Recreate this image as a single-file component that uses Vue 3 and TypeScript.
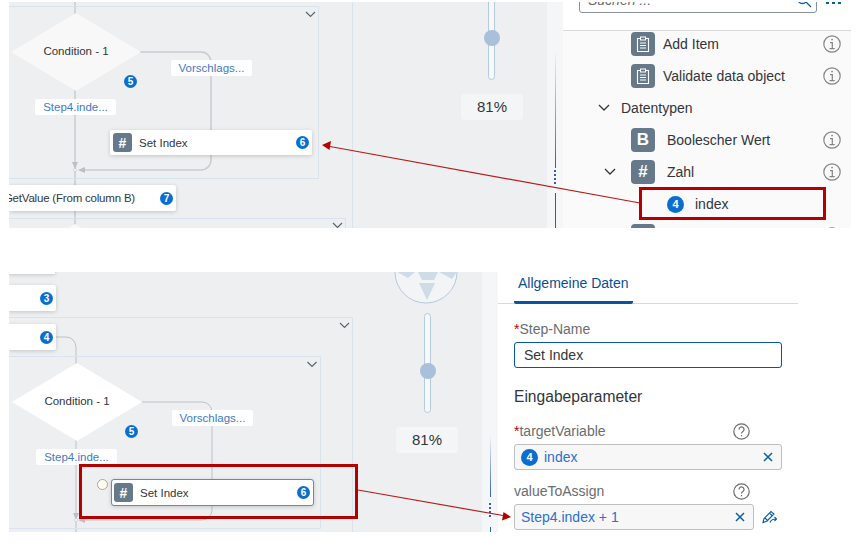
<template>
  <div class="page">
    <!-- first capture: variable picked from the tree -->
    <section class="shot shot-top">
      <div class="canvas">
        <svg class="edges" viewBox="0 2 538 226" width="538" height="226">
          <g transform="translate(-9 0)">
            <path class="edge" d="M75 2V228M140 52H201a10 10 0 0 1 10 10V160a10 10 0 0 1-10 10H80" />
            <path class="group" d="M9 6.500H318.500V178.500H9M9 218.500H345.500V228M352.500 2V228" />
            <path class="chev" d="M306 12l4.500 4.500 4.500-4.500M333 223l4.500 4.500 4.500-4.500" />
            <path class="tip" d="M72 162h6l-3 7zM85 167v6l-7-3z" />
            <circle class="joint" cx="75" cy="170" r="1.500" />
          </g>
        </svg>
        <div class="diamond d-top"><span>Condition - 1</span></div>
        <i class="badge b-5-top">5</i>
        <span class="tag t-vor-top">Vorschlags...</span>
        <span class="tag t-step-top">Step4.inde...</span>
        <div class="node n-set-top">
          <b class="tile small">#</b>
          <span>Set Index</span>
          <i class="badge end">6</i>
        </div>
        <div class="node n-get">
          <span>GetValue (From column B)</span>
          <i class="badge end">7</i>
        </div>
        <div class="diamond d-next"></div>
        <div class="slider s-top"><i></i></div>
        <div class="zoom z-top">81%</div>
      </div>
      <div class="strip strip-top">
        <i class="rail r1"></i>
        <i class="dots"></i>
        <i class="rail r2"></i>
      </div>
      <aside class="tree">
        <header class="tree-head">
          <div class="search">
            <span>Suchen ...</span>
            <svg width="16" height="16" viewBox="0 0 16 16">
              <circle cx="6.500" cy="6.500" r="5" />
              <path d="M10 10l5 5" />
            </svg>
          </div>
          <div class="more"><i></i><i></i><i></i></div>
        </header>
        <div class="rows">
          <div v-for="row in rows" :key="row.label" class="row" :class="row.kind">
            <svg v-if="row.open" class="caret" width="12" height="8" viewBox="0 0 12 8">
              <path d="M1 1l5 5 5-5" />
            </svg>
            <b v-if="row.tile" class="tile">
              <svg v-if="row.tile === 'clip'" width="14" height="17" viewBox="0 0 14 17">
                <path d="M4 2.500H1.500v13h11v-13H10" />
                <path d="M4.500 1h5v3h-5zM4 7h6M4 9.500h6M4 12h6" />
              </svg>
              <template v-else>{{ row.tile }}</template>
            </b>
            <i v-if="row.badge" class="badge big">{{ row.badge }}</i>
            <span>{{ row.label }}</span>
            <svg v-if="row.info" class="info" width="18" height="18" viewBox="0 0 18 18">
              <circle cx="9" cy="9" r="8.200" />
              <path d="M7 7.700h2.300V13.500M6.500 13.700h5.200M8.300 4.600h1.600" />
            </svg>
          </div>
        </div>
      </aside>
      <svg class="overlay" viewBox="0 2 860 226" width="860" height="226">
        <path class="red-line" d="M640 203L330 146.500" />
        <path class="red-fill" d="M322 145l9-4-1.500 9z" />
        <rect class="red-box" x="640.500" y="188.500" width="184" height="30" />
      </svg>
    </section>

    <!-- second capture: the step with its parameters -->
    <section class="shot shot-bottom">
      <div class="canvas">
        <svg class="edges" viewBox="0 272 473 260" width="473" height="260">
          <g transform="translate(-9 0)">
            <path class="edge thin" d="M56 337H66a10 10 0 0 1 10 10V532M142 402H202a10 10 0 0 1 10 10V510a10 10 0 0 1-10 10H80" />
            <path class="group" d="M9 317.500H352.500V532M9 356.500H320.500V528.500H9" />
            <path class="chev" d="M340 323l4.500 4.500 4.500-4.500M307.500 362l4.500 4.500 4.500-4.500" />
            <path class="tip" d="M73 513h6l-3 7zM85 517v6l-7-3z" />
            <circle class="joint" cx="76" cy="520" r="1.500" />
          </g>
        </svg>
        <div class="stub"></div>
        <div class="node n-3"><i class="badge end">3</i></div>
        <div class="node n-4"><i class="badge end">4</i></div>
        <div class="diamond d-bottom"><span>Condition - 1</span></div>
        <i class="badge b-5-bottom">5</i>
        <span class="tag t-vor-bottom">Vorschlags...</span>
        <span class="tag t-step-bottom">Step4.inde...</span>
        <i class="ring"></i>
        <div class="node n-set-bottom">
          <b class="tile small">#</b>
          <span>Set Index</span>
          <i class="badge end">6</i>
        </div>
        <svg class="compass" width="64" height="32" viewBox="0 0 64 32">
          <circle cx="32" cy="0" r="31" />
          <path d="M25 11h16l-8 17zM24 0h20l-4 8H28zM3 0h18l-7 6zM45 0h18l-5 7z" />
        </svg>
        <div class="slider s-bottom"><i></i></div>
        <div class="zoom z-bottom">81%</div>
      </div>
      <div class="strip strip-bottom">
        <i class="rail r3"></i>
        <i class="dots"></i>
        <i class="rail r4"></i>
      </div>
      <aside class="props">
        <nav class="tabs"><span class="tab">Allgemeine Daten</span></nav>
        <div class="form">
          <label class="lab"><em>*</em>Step-Name</label>
          <div class="field focus">Set Index</div>
          <h3>Eingabeparameter</h3>
          <div class="lab with-help">
            <span><em>*</em>targetVariable</span>
            <svg class="help" width="17" height="17" viewBox="0 0 17 17">
              <circle cx="8.500" cy="8.500" r="7.700" />
              <path d="M6 6.500a2.500 2.500 0 1 1 3.800 2.100c-.9.600-1.300 1-1.300 2M8.500 12v1.300" />
            </svg>
          </div>
          <div class="field token">
            <i class="badge big">4</i>
            <span class="link">index</span>
            <svg class="clear" width="10" height="10" viewBox="0 0 10 10"><path d="M1 1l8 8M9 1l-8 8" /></svg>
          </div>
          <div class="lab with-help">
            <span>valueToAssign</span>
            <svg class="help" width="17" height="17" viewBox="0 0 17 17">
              <circle cx="8.500" cy="8.500" r="7.700" />
              <path d="M6 6.500a2.500 2.500 0 1 1 3.800 2.100c-.9.600-1.300 1-1.300 2M8.500 12v1.300" />
            </svg>
          </div>
          <div class="value-row">
            <div class="field token short">
              <span class="link">Step4.index + 1</span>
              <svg class="clear" width="10" height="10" viewBox="0 0 10 10"><path d="M1 1l8 8M9 1l-8 8" /></svg>
            </div>
            <svg class="pen" width="16" height="14" viewBox="0 0 16 14">
              <path d="M1 12.500l1-4L9 1.500l3 2.500-7 7zM3 8l3 3M7.500 3l3 3M8 12.500c1-3 3-3.500 6-3.500M12.500 7l2 2-2 2" />
            </svg>
          </div>
        </div>
      </aside>
      <svg class="overlay" viewBox="0 272 860 260" width="860" height="260">
        <path class="red-line" d="M358 490L503 515.500" />
        <path class="red-fill" d="M511 517l-9 3.500 1.500-8.500z" />
        <rect class="red-box" x="80.500" y="465.500" width="276" height="52" />
      </svg>
    </section>
  </div>
</template>

<script setup lang="ts">
interface TreeRow {
  label: string
  kind: string
  tile?: string
  badge?: string
  open?: boolean
  info?: boolean
}

const rows: TreeRow[] = [
  { label: 'Add Item', kind: 'leaf tight', tile: 'clip', info: true },
  { label: 'Validate data object', kind: 'leaf tight', tile: 'clip', info: true },
  { label: 'Datentypen', kind: 'group-row', open: true },
  { label: 'Boolescher Wert', kind: 'leaf', tile: 'B', info: true },
  { label: 'Zahl', kind: 'sub', tile: '#', open: true, info: true },
  { label: 'index', kind: 'var', badge: '4' },
  { label: '', kind: 'leaf', tile: 'clip', info: true }
]
</script>

<style>
html,
body {
  background: #fff;
}
</style>

<style scoped>
.page {
  width: 860px;
  height: 547px;
  padding-top: 2px;
  box-sizing: border-box;
  overflow: hidden;
  font-family: "Liberation Sans", Arial, sans-serif;
  color: #32363a;
}

.shot {
  position: relative;
  display: flex;
  padding-left: 9px;
}

.shot-top {
  height: 226px;
}

.shot-bottom {
  height: 260px;
  margin-top: 44px;
}

.canvas {
  position: relative;
  overflow: hidden;
  background: #edeff1;
}

.shot-top .canvas {
  width: 538px;
}

.shot-bottom .canvas {
  width: 473px;
}

.edges {
  position: absolute;
  left: 0;
  top: 0;
}

.edge {
  fill: none;
  stroke: #c9ccce;
  stroke-width: 1.500;
}

.edge.thin {
  stroke-width: 1;
  stroke: #bfc3c6;
}

.group {
  fill: none;
  stroke: #d9e3ee;
}

.chev {
  fill: none;
  stroke: #5b6670;
  stroke-width: 1.200;
}

.tip {
  fill: #bcc0c3;
}

.joint {
  fill: #fff;
  stroke: #bcc0c3;
  stroke-width: 0.600;
}

/* diagram nodes sit at their own place on the canvas */
.diamond {
  position: absolute;
  width: 130px;
  height: 78px;
  display: flex;
  align-items: center;
  justify-content: center;
  font-size: 11.500px;
  color: #32363a;
}

.diamond::before {
  content: "";
  position: absolute;
  inset: 0;
  background: #fff;
  clip-path: polygon(50% 0, 100% 50%, 50% 100%, 0 50%);
}

.diamond span {
  position: relative;
  top: -1px;
}

.d-top {
  left: 2px;
  top: 11px;
}

.d-top::before {
  background: #f8f8f8;
}

.d-next {
  left: 1px;
  top: 222px;
}

.d-next::before {
  background: #f8f8f8;
}

.d-bottom {
  left: 3px;
  top: 91px;
}

.tag {
  position: absolute;
  width: 81px;
  height: 16px;
  line-height: 16px;
  border-radius: 2px;
  background: #fff;
  color: #3f79c4;
  font-size: 11.500px;
  text-align: center;
}

.t-vor-top {
  left: 162px;
  top: 58px;
}

.t-step-top {
  left: 26px;
  top: 97px;
}

.t-vor-bottom {
  left: 163px;
  top: 138px;
}

.t-step-bottom {
  left: 27px;
  top: 177px;
}

.node {
  position: absolute;
  display: flex;
  align-items: center;
  gap: 7px;
  box-sizing: border-box;
  background: #fff;
  border-radius: 0 2px 2px 0;
  box-shadow: 0 1px 4px rgba(0, 0, 0, 0.18);
  font-size: 11.500px;
  white-space: nowrap;
}

.n-set-top {
  left: 101px;
  top: 128px;
  width: 202px;
  height: 25px;
  padding-left: 3px;
  border-radius: 2px;
}

.n-get {
  left: 0;
  top: 183px;
  width: 167px;
  height: 26px;
  justify-content: flex-end;
  padding-right: 41px;
  letter-spacing: -0.200px;
}

.n-3 {
  left: 0;
  top: 13px;
  width: 47px;
  height: 26px;
}

.n-4 {
  left: 0;
  top: 52px;
  width: 47px;
  height: 26px;
}

.n-set-bottom {
  left: 102px;
  top: 207px;
  width: 203px;
  height: 27px;
  padding-left: 2px;
  border: 1px solid #5f8cb9;
  border-radius: 3px;
}

.stub {
  position: absolute;
  left: 0;
  top: -24px;
  width: 46px;
  height: 26px;
  background: #fff;
  box-shadow: 0 1px 4px rgba(0, 0, 0, 0.18);
}

.ring {
  position: absolute;
  left: 88px;
  top: 207px;
  width: 9px;
  height: 9px;
  border: 1px solid #f0923c;
  border-radius: 50%;
  background: #fff;
}

.badge {
  display: inline-flex;
  align-items: center;
  justify-content: center;
  width: 13px;
  height: 13px;
  flex: none;
  border-radius: 50%;
  background: #0a6ed1;
  color: #fff;
  font-size: 10px;
  font-weight: 700;
  font-style: normal;
}

.badge.big {
  width: 17px;
  height: 17px;
  font-size: 11px;
}

.badge.end {
  position: absolute;
  right: 3px;
  top: 50%;
  margin-top: -6.500px;
}

.b-5-top {
  position: absolute;
  left: 115px;
  top: 73px;
}

.b-5-bottom {
  position: absolute;
  left: 116px;
  top: 153px;
}

.tile {
  display: inline-flex;
  align-items: center;
  justify-content: center;
  width: 24px;
  height: 24px;
  flex: none;
  border-radius: 4px;
  background: #65798a;
  color: #fff;
  font-size: 17px;
  font-weight: 700;
}

.tile.small {
  width: 19px;
  height: 19px;
  border-radius: 3px;
  font-size: 14px;
}

.tile svg {
  fill: none;
  stroke: #fff;
  stroke-width: 1.100;
}

.slider {
  position: absolute;
  width: 7px;
  box-sizing: border-box;
  background: #f6f8fa;
  border: 1px solid #b7c9dc;
  border-radius: 4px;
}

.slider i {
  position: absolute;
  left: -5px;
  width: 16px;
  height: 16px;
  border-radius: 50%;
  background: #a8c0da;
}

.s-top {
  left: 479px;
  top: -20px;
  height: 98px;
}

.s-top i {
  top: 47px;
}

.s-bottom {
  left: 415px;
  top: 41px;
  height: 100px;
}

.s-bottom i {
  top: 49px;
}

.zoom {
  position: absolute;
  width: 62px;
  height: 26px;
  line-height: 26px;
  border-radius: 3px;
  background: #f4f5f6;
  text-align: center;
  font-size: 15px;
}

.z-top {
  left: 452px;
  top: 92px;
}

.z-bottom {
  left: 387px;
  top: 155px;
}

.compass {
  position: absolute;
  left: 385px;
  top: 0;
}

.compass circle {
  fill: #f2f4f6;
  stroke: #b7c9dc;
}

.compass path {
  fill: #cfdce8;
}

.strip {
  position: relative;
  width: 16px;
  background: #f5f6f7;
}

.rail {
  position: absolute;
  left: 8px;
  width: 1px;
  background: #2a629c;
}

.r1 {
  top: 48px;
  height: 118px;
  background: linear-gradient(#f5f6f7, #2a629c);
}

.r2 {
  top: 191px;
  height: 35px;
}

.r3 {
  top: 163px;
  height: 62px;
  background: linear-gradient(#f5f6f7, #2a629c);
}

.r4 {
  top: 255px;
  height: 5px;
}

.dots {
  position: absolute;
  left: 7px;
  width: 2px;
  height: 14px;
  background: repeating-linear-gradient(#3b5ba5 0 2px, transparent 2px 4px);
}

.strip-top .dots {
  top: 168px;
}

.strip-bottom .dots {
  top: 231px;
}

.tree {
  width: 288px;
  height: 226px;
  overflow: hidden;
  background: #fafafa;
}

.tree-head {
  position: relative;
  height: 28px;
  background: #fff;
  border-bottom: 1px solid #d9d9d9;
  overflow: hidden;
}

.search {
  display: flex;
  align-items: center;
  justify-content: space-between;
  box-sizing: border-box;
  width: 238px;
  height: 26px;
  margin: -15px 0 0 16px;
  padding: 0 4px 0 8px;
  border: 1px solid #89919a;
  border-radius: 3px;
  font-size: 14px;
  font-style: italic;
  color: #6a6d70;
}

.search svg {
  fill: none;
  stroke: #0a5ea8;
  stroke-width: 1.300;
}

.more {
  position: absolute;
  left: 263px;
  top: 0;
  display: flex;
  gap: 3px;
}

.more i {
  width: 3px;
  height: 2px;
  background: #0a5ea8;
}

.rows {
  display: flex;
  flex-direction: column;
  gap: 8px;
  padding: 1px 10px 0 0;
}

.row {
  display: flex;
  align-items: center;
  flex: none;
  height: 24px;
  font-size: 14px;
  color: #32363a;
}

.row .info {
  margin-left: auto;
  fill: none;
  stroke: #858585;
  stroke-width: 1.200;
}

.leaf {
  padding-left: 68px;
  gap: 12px;
}

.leaf.tight {
  gap: 8px;
}

.group-row {
  padding-left: 35px;
  gap: 11px;
}

.sub {
  padding-left: 41px;
  gap: 15px;
}

.sub > span {
  margin-left: -3px;
}

.var {
  padding-left: 104px;
  gap: 11px;
}

.caret {
  flex: none;
  fill: none;
  stroke: #32363a;
  stroke-width: 1.300;
}

.props {
  width: 300px;
  background: #fff;
}

.tabs {
  height: 32px;
  padding-left: 16px;
  box-sizing: border-box;
  border-bottom: 1px solid #d9d9d9;
}

.tab {
  display: inline-block;
  height: 32px;
  box-sizing: border-box;
  padding: 3px 4px 0;
  border-bottom: 3px solid #0854a0;
  border-radius: 0 0 2px 2px;
  color: #0a4f94;
  font-size: 14px;
}

.form {
  padding: 17px 16px 0;
}

.lab {
  display: block;
  height: 16px;
  line-height: 16px;
  margin-bottom: 5px;
  font-size: 14px;
  color: #6a6d70;
}

.lab em {
  color: #bb0000;
  font-style: normal;
}

.with-help {
  display: flex;
  align-items: center;
  justify-content: space-between;
  width: 236px;
}

.help {
  fill: none;
  stroke: #6a6d70;
  stroke-width: 1.200;
}

.field {
  display: flex;
  align-items: center;
  box-sizing: border-box;
  width: 268px;
  height: 26px;
  font-size: 14px;
  border-radius: 3px;
}

.focus {
  padding-left: 9px;
  border: 1px solid #0854a0;
}

.token {
  justify-content: flex-start;
  gap: 6px;
  padding: 0 8px 0 6px;
  margin-bottom: 13px;
  background: #f7f7f7;
  border: 1px solid #bfbfbf;
}

.token .clear {
  margin-left: auto;
  fill: none;
  stroke: #0a5ea8;
  stroke-width: 1.500;
}

.link {
  color: #2f6fce;
}

.short {
  width: 240px;
  margin-bottom: 0;
}

h3 {
  height: 22px;
  line-height: 22px;
  margin: 18px 0 15px;
  font-size: 15.600px;
  font-weight: 400;
  color: #32363a;
}

.value-row {
  display: flex;
  align-items: center;
  gap: 8px;
}

.pen {
  fill: none;
  stroke: #0a5ea8;
  stroke-width: 1.100;
}

.overlay {
  position: absolute;
  left: 0;
  top: 0;
  pointer-events: none;
}

.red-line {
  fill: none;
  stroke: #b71c1c;
  stroke-width: 1.200;
}

.red-fill {
  fill: #b50000;
}

.red-box {
  fill: none;
  stroke: #b50000;
  stroke-width: 3;
}
</style>
